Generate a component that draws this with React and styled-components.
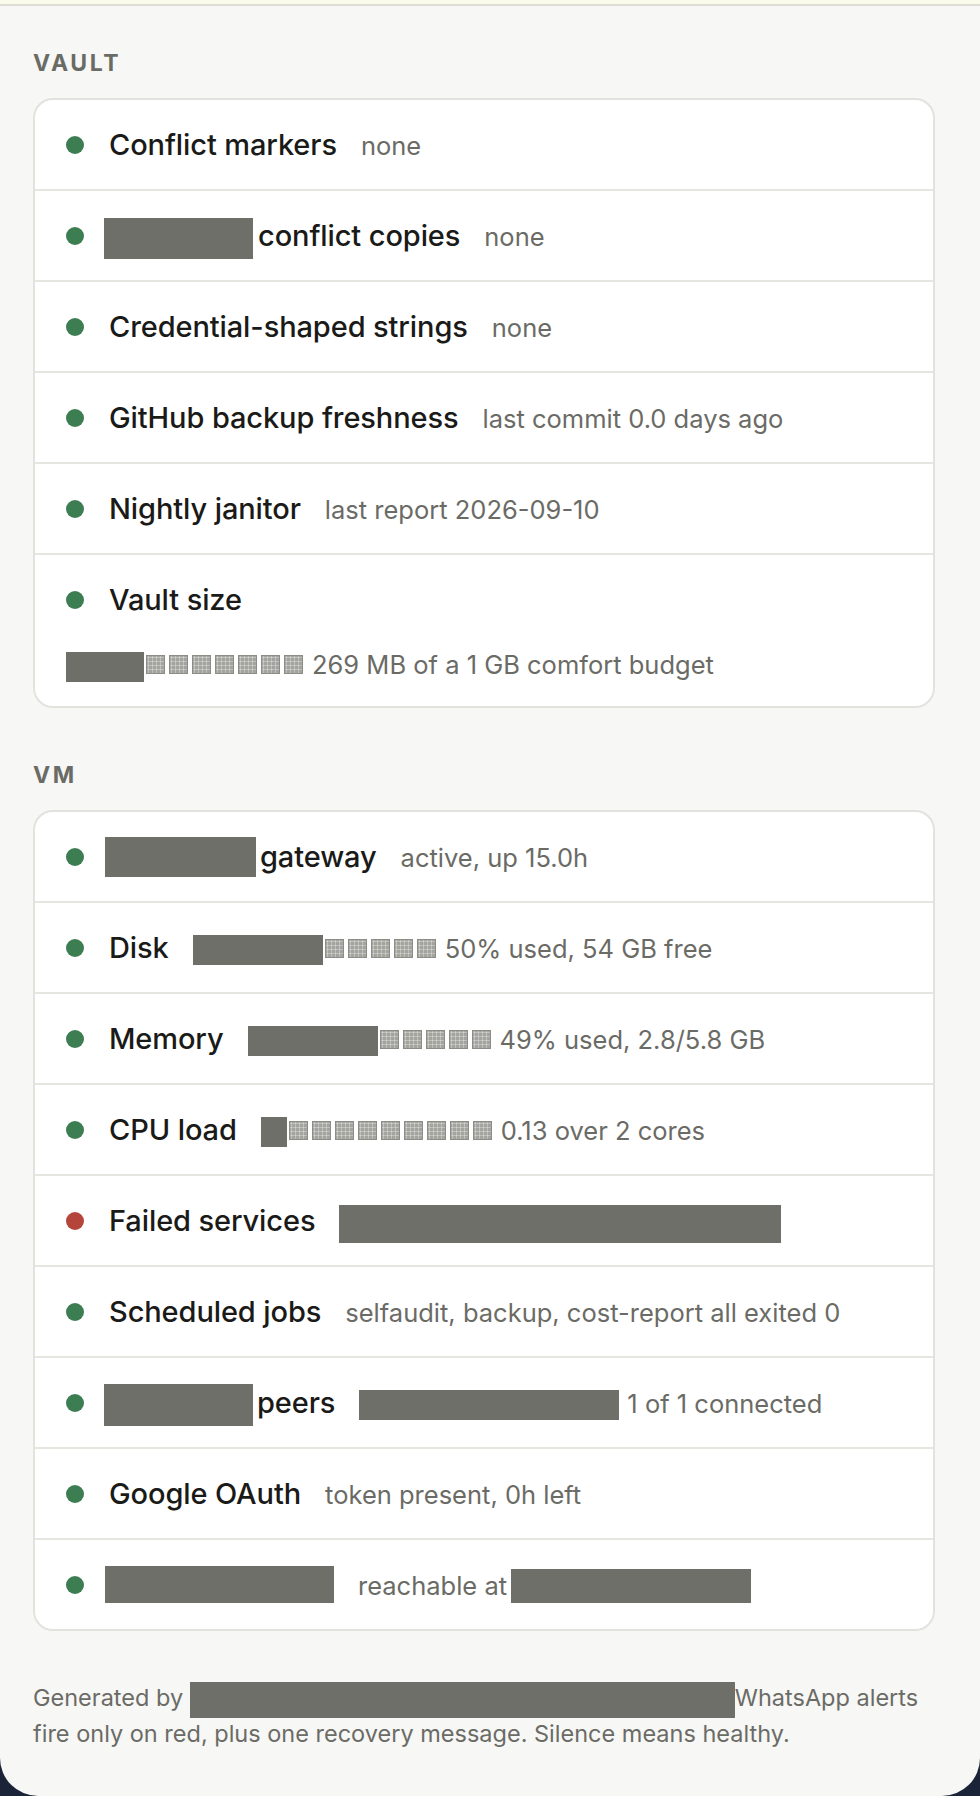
import React from 'react';
import styled, { createGlobalStyle } from 'styled-components';

const GlobalStyle = createGlobalStyle`
  html, body {
    margin: 0;
    padding: 0;
    background: #1b2338;
  }
  body {
    font-family: Inter, "Noto Sans", "Liberation Sans", sans-serif;
    -webkit-font-smoothing: antialiased;
  }
`;

const Page = styled.div`
  min-height: 1796px;
  box-sizing: border-box;
  background: #f7f7f5;
  border-radius: 0 0 38px 38px;
  overflow: hidden;
`;

const TopStrip = styled.div`
  height: 4px;
  background: #fbfbeb;
  border-bottom: 2px solid #deded5;
`;

const Main = styled.main`
  padding: 43px 45px 40px 33px;
  display: flex;
  flex-direction: column;
`;

const Section = styled.section`
  display: flex;
  flex-direction: column;
  margin-bottom: 53px;
  &:last-of-type {
    margin-bottom: 0;
  }
`;

const Label = styled.h2`
  margin: 0 0 21px;
  font-size: 23px;
  line-height: 28px;
  font-weight: 700;
  letter-spacing: 2.6px;
  text-transform: uppercase;
  color: #6b6b66;
`;

const Card = styled.div`
  background: #ffffff;
  border: 2px solid #e3e3de;
  border-radius: 20px;
  overflow: hidden;
`;

const Row = styled.div`
  padding: 30px 32px 29px 31px;
  border-bottom: 2px solid #e6e6e1;
  &:last-child {
    border-bottom: none;
  }
`;

const Head = styled.div`
  display: flex;
  align-items: center;
  gap: 25px;
  height: 30px;
`;

const Dot = styled.span`
  flex: none;
  width: 18px;
  height: 18px;
  border-radius: 50%;
  background: ${({ $status }) => ($status === 'red' ? '#b5453a' : '#3d7d52')};
`;

const Body = styled.div`
  display: flex;
  align-items: baseline;
  gap: 24px;
  white-space: nowrap;
`;

const Title = styled.span`
  font-size: 29px;
  line-height: 30px;
  font-weight: 500;
  letter-spacing: -0.1px;
  color: #1a1a18;
`;

const Meta = styled.span`
  font-size: 25.5px;
  line-height: 30px;
  color: #6b6b66;
`;

/* zero-height margin box so a redaction never grows the line */
const Redacted = styled.span`
  display: inline-block;
  width: ${({ $w }) => $w}px;
  height: ${({ $h }) => $h}px;
  margin-top: ${({ $h, $drop }) => -($h - $drop)}px;
  margin-bottom: ${({ $drop }) => -$drop}px;
  margin-left: ${({ $ml }) => $ml || 0}px;
  margin-right: ${({ $gap }) => $gap || 0}px;
  background: #6f6f6a;
`;

const Cells = styled.span`
  display: inline-flex;
  gap: 4px;
  margin: 0 9px 0 2px;
`;

const Cell = styled.span`
  display: inline-block;
  width: 17px;
  height: 17px;
  border: 1px solid #8d8d88;
  background-color: #a4a49f;
  background-image:
    linear-gradient(90deg, rgba(255, 255, 255, 0.3) 1px, transparent 1px),
    linear-gradient(rgba(255, 255, 255, 0.3) 1px, transparent 1px);
  background-size: 4px 4px;
  background-position: 1px 1px;
`;

const BarLine = styled.div`
  margin-top: 35px;
  height: 30px;
  line-height: 30px;
  font-size: 25.5px;
  color: #6b6b66;
  white-space: nowrap;
  margin-bottom: -3px;
`;

const Footer = styled.p`
  margin: 49px 0 0;
  font-size: 23.5px;
  line-height: 36px;
  color: #6b6b66;
`;

function Bar({ filled, empty, drop = 8 }) {
  return (
    <>
      <Redacted $w={filled} $h={30} $drop={drop} />
      <Cells>
        {Array.from({ length: empty }).map((_, i) => (
          <Cell key={i} />
        ))}
      </Cells>
    </>
  );
}

function Check({ status = 'green', title, meta, extra }) {
  return (
    <Row>
      <Head>
        <Dot $status={status} />
        <Body>
          <Title>{title}</Title>
          {meta && <Meta>{meta}</Meta>}
        </Body>
      </Head>
      {extra && <BarLine>{extra}</BarLine>}
    </Row>
  );
}

function App() {
  return (
    <Page>
      <GlobalStyle />
      <TopStrip />
      <Main>
        <Section>
          <Label>Vault</Label>
          <Card>
            <Check title="Conflict markers" meta="none" />
            <Check
              title={<><Redacted $w={149} $h={41} $drop={13} $ml={-5} $gap={5} />conflict copies</>}
              meta="none"
            />
            <Check title="Credential-shaped strings" meta="none" />
            <Check title="GitHub backup freshness" meta="last commit 0.0 days ago" />
            <Check title="Nightly janitor" meta="last report 2026-09-10" />
            <Check
              title="Vault size"
              extra={<><Bar filled={78} empty={7} />269 MB of a 1 GB comfort budget</>}
            />
          </Card>
        </Section>

        <Section>
          <Label>VM</Label>
          <Card>
            <Check
              title={<><Redacted $w={151} $h={40} $drop={10} $ml={-4} $gap={4} />gateway</>}
              meta="active, up 15.0h"
            />
            <Check
              title="Disk"
              meta={<><Bar filled={130} empty={5} drop={7} />50% used, 54 GB free</>}
            />
            <Check
              title="Memory"
              meta={<><Bar filled={130} empty={5} drop={7} />49% used, 2.8/5.8 GB</>}
            />
            <Check
              title="CPU load"
              meta={<><Bar filled={26} empty={9} drop={7} />0.13 over 2 cores</>}
            />
            <Check
              status="red"
              title="Failed services"
              meta={<Redacted $w={442} $h={38} $drop={12} />}
            />
            <Check title="Scheduled jobs" meta="selfaudit, backup, cost-report all exited 0" />
            <Check
              title={<><Redacted $w={149} $h={42} $drop={13} $ml={-5} $gap={4} />peers</>}
              meta={<><Redacted $w={260} $h={30} $drop={7} $gap={8} />1 of 1 connected</>}
            />
            <Check title="Google OAuth" meta="token present, 0h left" />
            <Check
              title={<Redacted $w={229} $h={37} $drop={8} $ml={-4} />}
              meta={<>reachable at<Redacted $w={240} $h={34} $drop={8} $ml={4} /></>}
            />
          </Card>
        </Section>

        <Footer>
          Generated by <Redacted $w={545} $h={36} $drop={12} />WhatsApp alerts
          <br />
          fire only on red, plus one recovery message. Silence means healthy.
        </Footer>
      </Main>
    </Page>
  );
}

export default App;
